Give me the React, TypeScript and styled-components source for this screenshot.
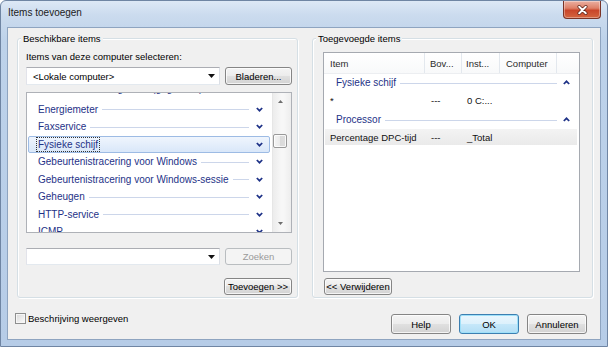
import React from "react";
import styled, { createGlobalStyle, css } from "styled-components";

const GlobalStyle = createGlobalStyle`
  html, body {
    margin: 0;
    padding: 0;
  }
  body {
    font-family: "Liberation Sans", Arial, sans-serif;
    font-size: 9.5px;
    color: #000;
  }
  * {
    box-sizing: border-box;
  }
`;

const Window = styled.div`
  width: 608px;
  height: 347px;
  display: flex;
  flex-direction: column;
  padding: 0 6px 6px;
  border: 1px solid #6f85a3;
  border-radius: 6px 6px 0 0;
  background: linear-gradient(180deg, #dde8f5 0px, #cbdbee 14px, #bdd2ea 40px, #b6cce7 100%);
  overflow: hidden;
`;

const TitleBar = styled.div`
  flex: none;
  height: 26px;
  display: flex;
  justify-content: space-between;
  align-items: flex-start;
`;

const Title = styled.span`
  padding-left: 1px;
  line-height: 24px;
  font-size: 10px;
  color: #1b1b1b;
`;

const CloseButton = styled.div`
  width: 38px;
  height: 18px;
  display: flex;
  align-items: center;
  justify-content: center;
  border: 1px solid #7a3326;
  border-top: none;
  border-radius: 0 0 4px 4px;
  background: linear-gradient(180deg, #eab0a2 0%, #de8068 42%, #c9462a 55%, #d4653f 100%);
  box-shadow: inset 0 0 0 1px rgba(255, 255, 255, 0.35);
`;

const Client = styled.div`
  flex: 1;
  display: flex;
  flex-direction: column;
  background: #f0f0f0;
  border: 1px solid #8ea4c0;
`;

const Groups = styled.div`
  display: flex;
  gap: 14px;
  padding: 3px 7px 0 9px;
`;

const GroupBox = styled.fieldset`
  flex: 1 1 0;
  min-width: 0;
  margin: 0;
  padding: 0;
  display: flex;
  flex-direction: column;
  border: 1px solid #d5dfe5;
  border-radius: 3px;
  box-shadow: inset 1px 1px 0 #fff, 1px 1px 0 #fff;
`;

const GroupLegend = styled.legend`
  margin-left: 3px;
  padding: 0 2px;
  line-height: 15px;
  background: #f0f0f0;
`;

const GroupBody = styled.div<{ $pad: string }>`
  flex: 1;
  display: flex;
  flex-direction: column;
  padding: ${(p) => p.$pad};
`;

const FieldLabel = styled.div`
  margin-top: 3px;
  line-height: 16px;
`;

const ComboRow = styled.div<{ $top: number; $height: number }>`
  display: flex;
  gap: 5px;
  margin-top: ${(p) => p.$top}px;
  height: ${(p) => p.$height}px;
`;

const ComboBox = styled.div`
  width: 194px;
  display: flex;
  align-items: center;
  justify-content: space-between;
  padding: 0 4px 0 6px;
  background: #fff;
  border: 1px solid;
  border-color: #abadb3 #dbdfe6 #e3e9ef #e2e3ea;
`;

const Button = styled.button<{ $width: number; $height?: number; $primary?: boolean; $end?: boolean }>`
  flex: none;
  width: ${(p) => p.$width}px;
  height: ${(p) => p.$height ?? 18}px;
  padding: 0;
  font: inherit;
  color: #000;
  border: 1px solid #858585;
  border-radius: 3px;
  background: linear-gradient(180deg, #f4f4f4 0%, #ececec 49%, #e0e0e0 50%, #d3d3d3 100%);
  box-shadow: inset 0 0 0 1px rgba(255, 255, 255, 0.75);
  align-self: ${(p) => (p.$end ? "flex-end" : "auto")};

  &:disabled {
    color: #9a9a9a;
    border-color: #b9bdc0;
    background: #f4f4f4;
    box-shadow: none;
  }

  ${(p) =>
    p.$primary &&
    css`
      border-color: #3c7fb1;
      background: linear-gradient(180deg, #eaf6fd 0%, #dcf1fc 49%, #c6e8fa 50%, #b3def5 100%);
      box-shadow: inset 0 0 0 1px #9ee0f9;
    `}
`;

const ListBox = styled.div`
  margin-top: 7px;
  height: 141px;
  display: flex;
  background: #fff;
  border: 1px solid #aeb1b7;
  overflow: hidden;
`;

const ListRows = styled.div`
  flex: 1;
  min-width: 0;
  margin-top: -10px;
  display: flex;
  flex-direction: column;
`;

const CategoryRow = styled.div<{ $selected?: boolean; $partial?: boolean }>`
  flex: none;
  height: 17.5px;
  margin: 0 2px 0 1px;
  padding: 0 6px ${(p) => (p.$partial ? 6 : 0)}px 7px;
  display: flex;
  align-items: center;
  font-size: 10px;
  color: #1e3287;
  border: 1px solid transparent;
  border-radius: 2px;
  white-space: nowrap;

  ${(p) =>
    p.$selected &&
    css`
      border-color: #9dbbe4;
      background: linear-gradient(180deg, #eff5fd, #d9e7f9);
    `}
`;

const CategoryText = styled.span<{ $focus?: boolean }>`
  padding: 0 1px;
  line-height: 13px;
  border: 1px dotted ${(p) => (p.$focus ? "#333" : "transparent")};
`;

const Rule = styled.span<{ $hidden?: boolean; $gap: number }>`
  flex: 1;
  height: 1px;
  margin: 1px 0 0 ${(p) => p.$gap}px;
  background: ${(p) => (p.$hidden ? "transparent" : "#ccd6ea")};
`;

const ChevronIcon = styled.svg<{ $gap: number }>`
  flex: none;
  margin-left: ${(p) => p.$gap}px;
`;

const ScrollBar = styled.div`
  flex: none;
  width: 19px;
  display: flex;
  flex-direction: column;
  padding-right: 4px;
  border-left: 1px solid #e6e6e6;
  background: linear-gradient(90deg, #ececec, #f7f7f7 45%, #f7f7f7 60%, #ededed);
`;

const ScrollArrow = styled.div`
  flex: none;
  height: 17px;
  display: flex;
  align-items: center;
  justify-content: center;
`;

const ScrollTrack = styled.div`
  flex: 1;
`;

const ScrollThumb = styled.div`
  height: 14px;
  border: 1px solid #999;
  border-radius: 2px;
  background: linear-gradient(90deg, #f4f4f4, #eaeaea 50%, #dadada 51%, #dedede);
  box-shadow: inset 0 0 0 1px rgba(255, 255, 255, 0.8);
`;

const ListView = styled.div`
  margin-top: 6px;
  height: 220px;
  display: flex;
  flex-direction: column;
  background: #fff;
  border: 1px solid #a5a9b0;
  overflow: hidden;
`;

const HeaderRow = styled.div`
  flex: none;
  height: 21px;
  display: flex;
  background: linear-gradient(180deg, #fff, #f8f9fa);
  border-bottom: 1px solid #eceef1;
`;

const HeaderCell = styled.div<{ $w: number; $pad: number }>`
  flex: none;
  width: ${(p) => p.$w}px;
  padding-left: ${(p) => p.$pad}px;
  display: flex;
  align-items: center;
  color: #2b2b2b;
  border-right: 1px solid #e3e8ee;
  white-space: nowrap;
  overflow: hidden;
`;

const GroupHeader = styled.div<{ $first?: boolean }>`
  flex: none;
  height: 18px;
  margin-top: ${(p) => (p.$first ? 0 : 3)}px;
  padding: 0 9px 1px 12px;
  display: flex;
  align-items: center;
  font-size: 10px;
  color: #1e3287;
`;

const DataRow = styled.div<{ $highlight?: boolean }>`
  flex: none;
  height: 16px;
  margin: 0 2px 0 1px;
  display: flex;
  align-items: center;
  background: ${(p) => (p.$highlight ? "linear-gradient(180deg, #f3f3f3, #eaeaea)" : "transparent")};
`;

const DataCell = styled.div<{ $w: number; $pad: number }>`
  flex: none;
  width: ${(p) => p.$w}px;
  padding-left: ${(p) => p.$pad}px;
  white-space: nowrap;
  overflow: hidden;
  color: #111;
`;

const Footer = styled.div`
  display: flex;
  justify-content: space-between;
  align-items: flex-start;
  padding: 15px 13px 0 7px;
`;

const CheckLabel = styled.label`
  display: flex;
  align-items: center;
  gap: 2px;
  line-height: 11px;
`;

const CheckBox = styled.span`
  width: 11px;
  height: 11px;
  border: 1px solid #8e8f8f;
  background: linear-gradient(135deg, #d9d9d9, #fbfbfb);
  box-shadow: inset 0 0 0 1px #f6f6f6;
`;

const DialogButtons = styled.div`
  display: flex;
  gap: 8px;
  margin-top: 1px;
`;

const Chevron = ({ up, gap }: { up?: boolean; gap: number }) => (
  <ChevronIcon $gap={gap} width="7" height="5" viewBox="0 0 7 5">
    <path
      d={up ? "M0.8 4 L3.5 1.3 L6.2 4" : "M0.8 1 L3.5 3.7 L6.2 1"}
      fill="none"
      stroke="#1e3287"
      strokeWidth="1.7"
    />
  </ChevronIcon>
);

const DropArrow = () => (
  <svg width="7" height="4" viewBox="0 0 7 4">
    <path d="M0 0 H7 L3.5 4 Z" fill="#111" />
  </svg>
);

const ScrollGlyph = ({ up }: { up?: boolean }) => (
  <svg width="5" height="3" viewBox="0 0 5 3">
    <path d={up ? "M0 3 H5 L2.5 0 Z" : "M0 0 H5 L2.5 3 Z"} fill="#6e6e6e" />
  </svg>
);

const categories = [
  "Distributed Routing Table (gegevens)",
  "Energiemeter",
  "Faxservice",
  "Fysieke schijf",
  "Gebeurtenistracering voor Windows",
  "Gebeurtenistracering voor Windows-sessie",
  "Geheugen",
  "HTTP-service",
  "ICMP",
];

const columns = [
  { label: "Item", w: 101, pad: 6 },
  { label: "Bov...", w: 37, pad: 5 },
  { label: "Inst...", w: 38, pad: 4 },
  { label: "Computer", w: 57, pad: 6 },
];

const added = [
  { group: "Fysieke schijf", rows: [{ item: "*", parent: "---", inst: "0 C:...", highlight: false }] },
  { group: "Processor", rows: [{ item: "Percentage DPC-tijd", parent: "---", inst: "_Total", highlight: true }] },
];

export default function App() {
  return (
    <>
      <GlobalStyle />
      <Window>
        <TitleBar>
          <Title>Items toevoegen</Title>
          <CloseButton>
            <svg width="11" height="10" viewBox="0 0 11 10">
              <path d="M2.2 1.8 L8.8 8.2 M8.8 1.8 L2.2 8.2" stroke="#5a2016" strokeWidth="3.4" strokeLinecap="round" />
              <path d="M2.2 1.8 L8.8 8.2 M8.8 1.8 L2.2 8.2" stroke="#fff" strokeWidth="2" strokeLinecap="round" />
            </svg>
          </CloseButton>
        </TitleBar>
        <Client>
          <Groups>
            <GroupBox>
              <GroupLegend>Beschikbare items</GroupLegend>
              <GroupBody $pad="0 5px 2px 8px">
                <FieldLabel>Items van deze computer selecteren:</FieldLabel>
                <ComboRow $top={2} $height={18}>
                  <ComboBox>
                    <span>&lt;Lokale computer&gt;</span>
                    <DropArrow />
                  </ComboBox>
                  <Button $width={67}>Bladeren...</Button>
                </ComboRow>
                <ListBox>
                  <ListRows>
                    {categories.map((name, i) => {
                      const selected = name === "Fysieke schijf";
                      return (
                        <CategoryRow key={name} $selected={selected} $partial={i === 0}>
                          <CategoryText $focus={selected}>{name}</CategoryText>
                          <Rule $gap={2} $hidden={selected} />
                          <Chevron gap={7} />
                        </CategoryRow>
                      );
                    })}
                  </ListRows>
                  <ScrollBar>
                    <ScrollArrow>
                      <ScrollGlyph up />
                    </ScrollArrow>
                    <ScrollTrack>
                      <ScrollThumb style={{ marginTop: 24 }} />
                    </ScrollTrack>
                    <ScrollArrow>
                      <ScrollGlyph />
                    </ScrollArrow>
                  </ScrollBar>
                </ListBox>
                <ComboRow $top={15} $height={17}>
                  <ComboBox>
                    <span />
                    <DropArrow />
                  </ComboBox>
                  <Button $width={67} $height={17} disabled>
                    Zoeken
                  </Button>
                </ComboRow>
                <Button $width={68} $height={17} $end style={{ marginTop: 13 }}>
                  Toevoegen &gt;&gt;
                </Button>
              </GroupBody>
            </GroupBox>
            <GroupBox>
              <GroupLegend>Toegevoegde items</GroupLegend>
              <GroupBody $pad="0 12px 2px 10px">
                <ListView>
                  <HeaderRow>
                    {columns.map((c) => (
                      <HeaderCell key={c.label} $w={c.w} $pad={c.pad}>
                        {c.label}
                      </HeaderCell>
                    ))}
                  </HeaderRow>
                  {added.map((g, gi) => (
                    <React.Fragment key={g.group}>
                      <GroupHeader $first={gi === 0}>
                        <span>{g.group}</span>
                        <Rule $gap={4} />
                        <Chevron up gap={6} />
                      </GroupHeader>
                      {g.rows.map((r) => (
                        <DataRow key={r.item} $highlight={r.highlight}>
                          <DataCell $w={100} $pad={5}>{r.item}</DataCell>
                          <DataCell $w={37} $pad={6}>{r.parent}</DataCell>
                          <DataCell $w={38} $pad={5}>{r.inst}</DataCell>
                        </DataRow>
                      ))}
                    </React.Fragment>
                  ))}
                </ListView>
                <Button $width={68} $height={17} style={{ marginTop: 6, marginLeft: 1 }}>
                  &lt;&lt; Verwijderen
                </Button>
              </GroupBody>
            </GroupBox>
          </Groups>
          <Footer>
            <CheckLabel>
              <CheckBox />
              Beschrijving weergeven
            </CheckLabel>
            <DialogButtons>
              <Button $width={60} $height={20}>Help</Button>
              <Button $width={60} $height={20} $primary>OK</Button>
              <Button $width={60} $height={20}>Annuleren</Button>
            </DialogButtons>
          </Footer>
        </Client>
      </Window>
    </>
  );
}
